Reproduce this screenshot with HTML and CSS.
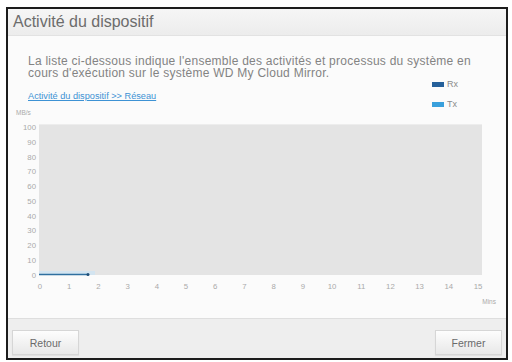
FILE: index.html
```html
<!DOCTYPE html>
<html lang="fr">
<head>
<meta charset="utf-8">
<title>Activité du dispositif</title>
<link rel="stylesheet" href="styles.css">
</head>
<body>
<div class="dialog">
  <div class="titlebar">Activité du dispositif</div>
  <div class="content">
    <div class="intro">
      <p class="desc">La liste ci-dessous indique l'ensemble des activités et processus du système en cours d'exécution sur le système WD My Cloud Mirror.</p>
      <div class="row">
        <a class="crumb" href="#">Activité du dispositif &gt;&gt; Réseau</a>
        <div class="legend">
          <div class="item"><span class="sw rx"></span>Rx</div>
          <div class="item"><span class="sw tx"></span>Tx</div>
        </div>
      </div>
    </div>
    <svg class="chart" width="498" height="200" viewBox="0 0 498 200">
      <text class="unit" x="8" y="7.5">MB/s</text>
      <rect x="31" y="17" width="443" height="151" fill="#e4e4e4"/>
      <line x1="31" y1="17.5" x2="474" y2="17.5" stroke="#ededed" stroke-width="1"/>
      <g class="ylab" text-anchor="end">
        <text x="28" y="23">100</text>
        <text x="28" y="37.7">90</text>
        <text x="28" y="52.5">80</text>
        <text x="28" y="67.2">70</text>
        <text x="28" y="82">60</text>
        <text x="28" y="96.7">50</text>
        <text x="28" y="111.5">40</text>
        <text x="28" y="126.2">30</text>
        <text x="28" y="141">20</text>
        <text x="28" y="155.7">10</text>
        <text x="28" y="170.5">0</text>
      </g>
      <rect x="31" y="164" width="56" height="4" fill="#d3e4f0"/>
      <line x1="31" y1="167.5" x2="80" y2="167.5" stroke="#2f6f9f" stroke-width="1.5"/>
      <circle cx="80" cy="167.5" r="1.5" fill="#1f4f78"/>
      <g class="xlab" text-anchor="middle">
        <text x="32" y="182">0</text>
        <text x="61.2" y="182">1</text>
        <text x="90.4" y="182">2</text>
        <text x="119.6" y="182">3</text>
        <text x="148.8" y="182">4</text>
        <text x="178" y="182">5</text>
        <text x="207.2" y="182">6</text>
        <text x="236.4" y="182">7</text>
        <text x="265.6" y="182">8</text>
        <text x="294.8" y="182">9</text>
        <text x="324" y="182">10</text>
        <text x="353.2" y="182">11</text>
        <text x="382.4" y="182">12</text>
        <text x="411.6" y="182">13</text>
        <text x="440.8" y="182">14</text>
        <text x="470" y="182">15</text>
      </g>
      <text class="unit" x="488" y="196.5" text-anchor="end">Mins</text>
    </svg>
  </div>
  <div class="footer">
    <button class="btn">Retour</button>
    <button class="btn">Fermer</button>
  </div>
</div>
</body>
</html>
```
FILE: styles.css
```css
html, body {
  margin: 0;
  padding: 0;
  background: #ffffff;
}
body {
  padding: 7px 0 0 6px;
  font-family: "Liberation Sans", Arial, sans-serif;
}
.dialog {
  box-sizing: border-box;
  width: 502px;
  height: 353px;
  border: 2px solid #1c1c1c;
  background: #fbfbfb;
  display: flex;
  flex-direction: column;
}
.titlebar {
  height: 27px;
  box-sizing: border-box;
  padding: 4px 0 0 5px;
  font-size: 16px;
  color: #6c6c6c;
  background: linear-gradient(#f6f6f6, #ececec);
  border-bottom: 1px solid #e2e2e2;
}
.content {
  flex: 1;
}
.intro {
  padding: 19px 20px 0 20px;
}
.desc {
  margin: 0;
  max-width: 452px;
  font-size: 12px;
  letter-spacing: 0.25px;
  line-height: 12px;
  color: #838383;
}
.row {
  display: flex;
  justify-content: space-between;
  height: 28px;
}
.crumb {
  margin-top: 12px;
  font-size: 9.2px;
  line-height: 10px;
  height: 10px;
  color: #3d92d4;
  text-decoration: underline;
}
.legend {
  display: flex;
  flex-direction: column;
  gap: 10px;
  width: 54px;
}
.item {
  display: flex;
  align-items: center;
  height: 10px;
  font-size: 9px;
  color: #8a8a8a;
}
.sw {
  width: 12px;
  height: 5px;
  margin-right: 3px;
}
.sw.rx { background: #25609a; }
.sw.tx { background: #3aa0dc; }
.chart {
  display: block;
}
.chart text {
  font-family: "Liberation Sans", Arial, sans-serif;
  font-size: 7.8px;
  fill: #aaaaaa;
}
.chart .unit {
  font-size: 6.5px;
}
.footer {
  height: 40px;
  box-sizing: border-box;
  border-top: 1px solid #dedede;
  background: #eeeeee;
  display: flex;
  justify-content: space-between;
  align-items: flex-end;
  padding: 0 4px 3px 4px;
}
.btn {
  width: 67px;
  height: 25px;
  border: 1px solid #d6d6d6;
  background: linear-gradient(#fdfdfd, #e8e8e8);
  font-family: "Liberation Sans", Arial, sans-serif;
  font-size: 10.5px;
  color: #6a6a6a;
  padding: 0;
  box-shadow: 0 1px 1px rgba(0,0,0,0.06);
}
```
